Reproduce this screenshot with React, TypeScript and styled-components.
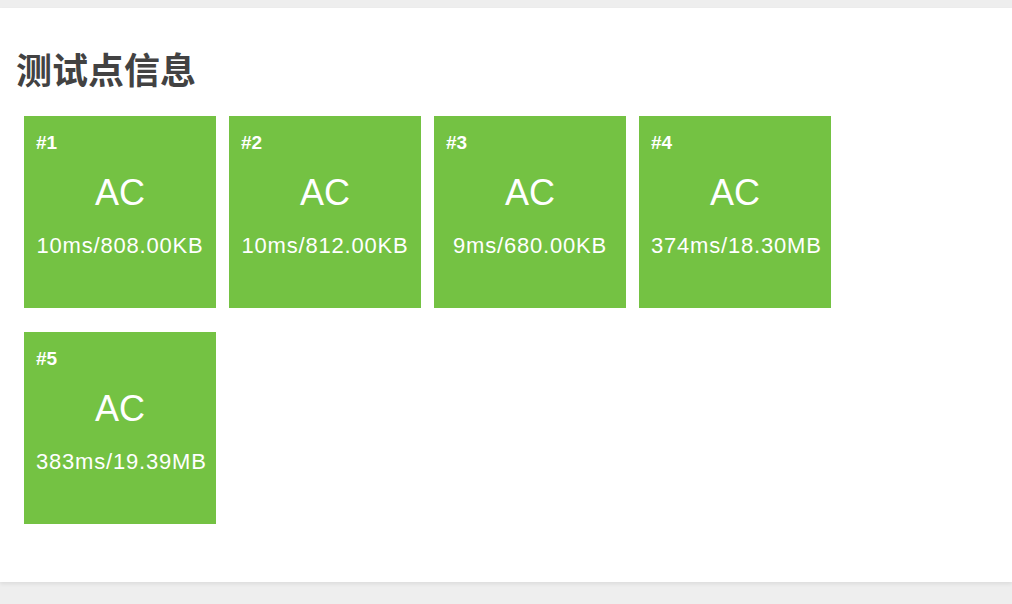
import styled, { createGlobalStyle } from 'styled-components';

interface TestCase {
  id: number;
  status: string;
  time: string;
  memory: string;
}

const cases: TestCase[] = [
  { id: 1, status: 'AC', time: '10ms', memory: '808.00KB' },
  { id: 2, status: 'AC', time: '10ms', memory: '812.00KB' },
  { id: 3, status: 'AC', time: '9ms', memory: '680.00KB' },
  { id: 4, status: 'AC', time: '374ms', memory: '18.30MB' },
  { id: 5, status: 'AC', time: '383ms', memory: '19.39MB' },
];

const GlobalStyle = createGlobalStyle`
  html, body {
    margin: 0;
    padding: 0;
    background: #eeeeee;
    font-family: "Liberation Sans", "Noto Sans CJK SC", sans-serif;
  }
`;

const Page = styled.div`
  padding-top: 8px;
  min-height: 604px;
  box-sizing: border-box;
`;

const Panel = styled.section`
  background: #ffffff;
  padding: 38px 17px 58px 16px;
  box-shadow: 0 2px 4px rgba(0, 0, 0, 0.08);
`;

const Title = styled.h2`
  margin: 0;
  font-family: "Noto Sans CJK SC", sans-serif;
  font-size: 36px;
  line-height: 44px;
  font-weight: 700;
  color: #424242;
`;

const Grid = styled.div`
  display: grid;
  grid-template-columns: repeat(4, 192px);
  column-gap: 13px;
  row-gap: 24px;
  margin: 26px 0 0 8px;
`;

const Card = styled.div<{ $ok: boolean }>`
  width: 192px;
  height: 192px;
  box-sizing: border-box;
  padding: 15px 12px 0 12px;
  background: ${(p) => (p.$ok ? '#74c243' : '#e74c3c')};
  color: #ffffff;
  display: flex;
  flex-direction: column;
`;

const CaseNo = styled.div`
  font-size: 19px;
  line-height: 24px;
  font-weight: 700;
`;

const Verdict = styled.div`
  margin-top: 18px;
  font-size: 36px;
  line-height: 40px;
  text-align: center;
`;

const Usage = styled.div`
  margin-top: 19px;
  font-size: 22px;
  line-height: 28px;
  letter-spacing: 0.8px;
  text-align: center;
  white-space: nowrap;
`;

const App = () => {
  return (
    <>
      <GlobalStyle />
      <Page>
        <Panel>
          <Title>测试点信息</Title>
          <Grid>
            {cases.map((c) => (
              <Card key={c.id} $ok={c.status === 'AC'}>
                <CaseNo>#{c.id}</CaseNo>
                <Verdict>{c.status}</Verdict>
                <Usage>{c.time}/{c.memory}</Usage>
              </Card>
            ))}
          </Grid>
        </Panel>
      </Page>
    </>
  );
};

export default App;
